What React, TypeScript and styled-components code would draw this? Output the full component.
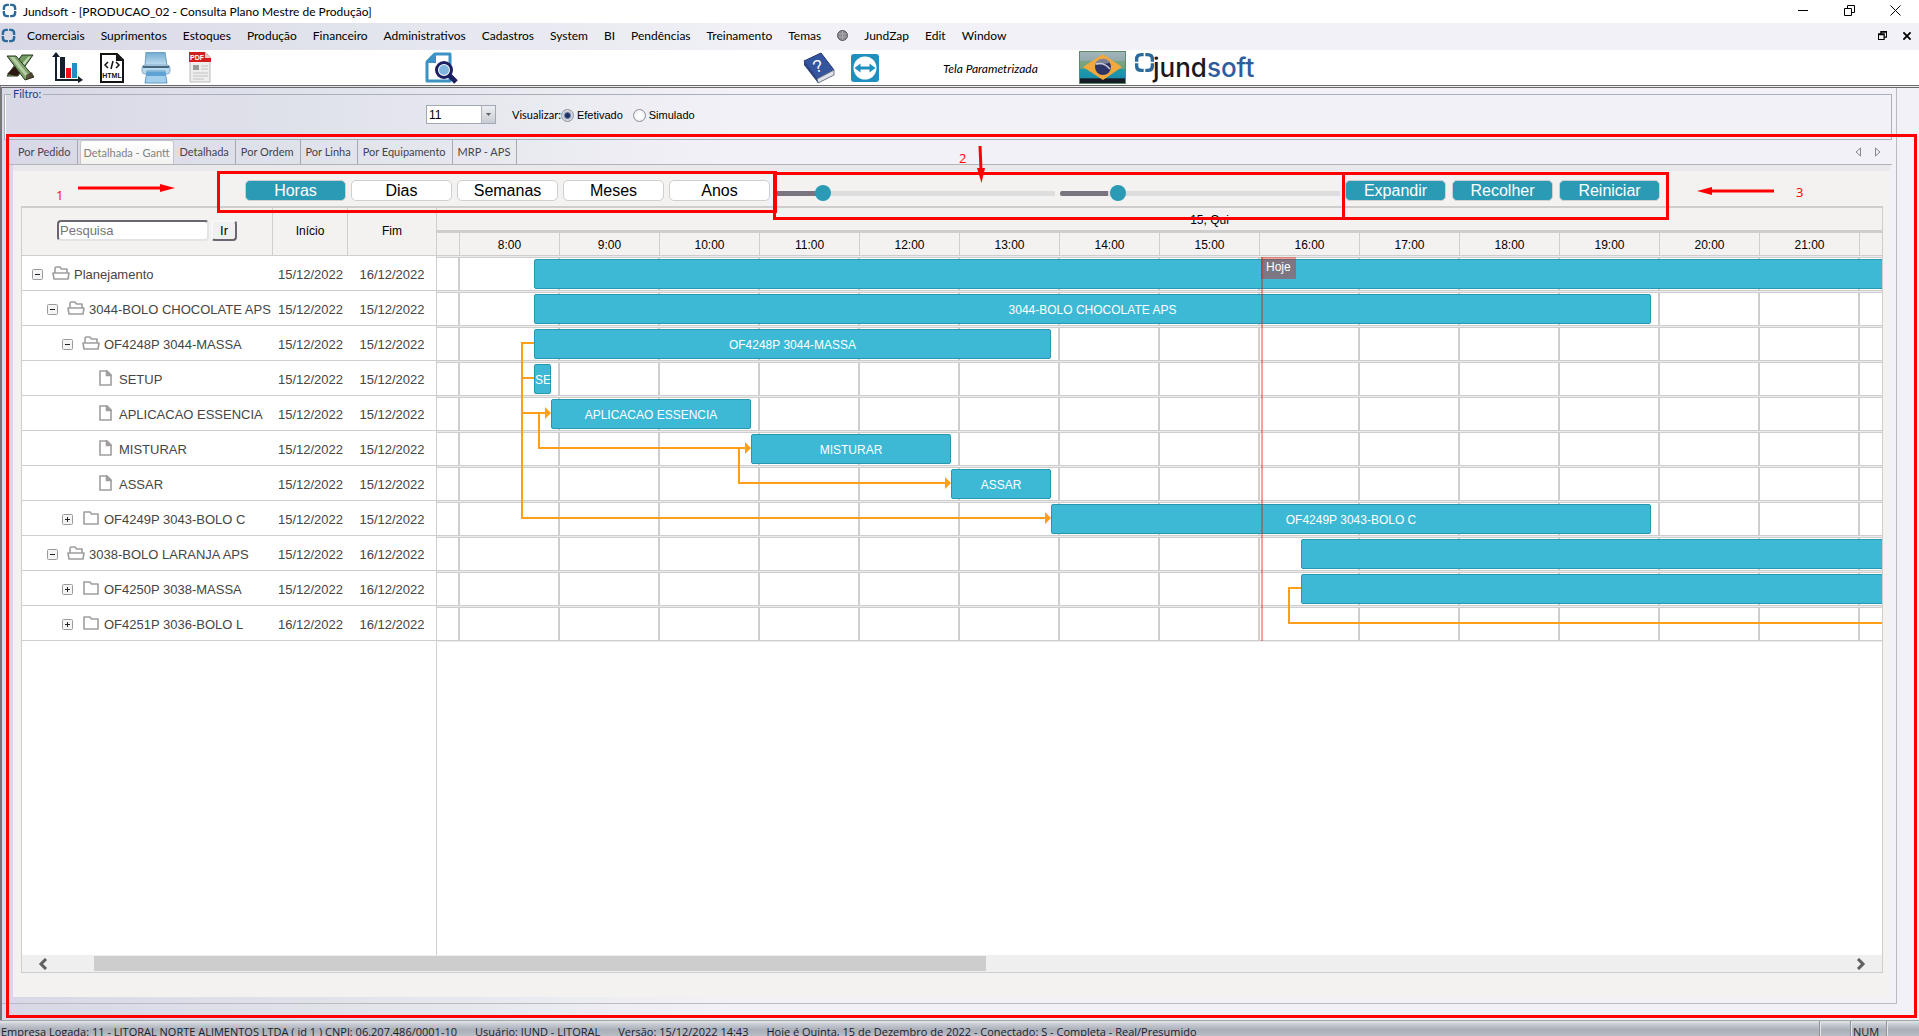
import React, { useState } from 'react';
import styled, { createGlobalStyle, css } from 'styled-components';

const uiFont = 'Lato, "Open Sans", sans-serif';
const webFont = '"Liberation Sans", Arial, sans-serif';
const red = '#ff0000';
const teal = '#2b9ab5';
const line = '#cecece';
const todayTint = 'rgba(229, 12, 0, 0.39)';

const GlobalStyle = createGlobalStyle`
  *, *::before, *::after { box-sizing: border-box; }
  body { margin: 0; overflow: hidden; background: #fff; font-family: ${uiFont}; font-size: 12px; color: #000; }
  button, input, select { font-family: inherit; font-size: inherit; color: inherit; margin: 0; }
  button { border: 0; padding: 0; background: none; cursor: pointer; }
  svg { display: block; }
`;

const Screen = styled.div`
  height: 100vh;
  display: flex;
  flex-direction: column;
  overflow: hidden;
`;

/* ---------- window chrome ---------- */

const TitleBar = styled.header`
  flex: 0 0 23px;
  display: flex;
  align-items: center;
  padding: 0 18px 2px 2px;
  background: #fff;
`;
const TitleText = styled.h1`
  margin: 0 auto 0 6px;
  padding-top: 2px;
  font-size: 12px;
  font-weight: 400;
  line-height: 16px;
`;
const WindowButtons = styled.div`
  display: flex;
  gap: ${(p: { $gap: number }) => p.$gap}px;
`;
const MenuBar = styled.nav`
  flex: 0 0 27px;
  display: flex;
  align-items: center;
  padding: 0 8px 2px 1px;
  background: linear-gradient(90deg, #d8d8e6, #e2e4ec 18%, #f1f1f7 40%);
`;
const MenuList = styled.div`
  display: flex;
  align-items: center;
  gap: 16px;
  margin: 0 auto 0 11px;
`;
const MenuItem = styled.button`
  line-height: 16px;
  white-space: nowrap;
`;

const ToolBar = styled.div`
  flex: 0 0 35px;
  display: flex;
  align-items: center;
  padding-left: 6px;
  background: #fff;
`;
const ToolGroup = styled.div<{ $width: number; $gap: number }>`
  flex: 0 0 ${(p) => p.$width}px;
  display: flex;
  align-items: center;
  gap: ${(p) => p.$gap}px;
`;
const ScreenNote = styled.em`
  flex: 0 0 136px;
  line-height: 16px;
  padding-top: 3px;
`;
const Logo = styled.div`
  display: flex;
  align-items: flex-start;
  margin-left: 8px;
`;
const LogoText = styled.span`
  font-family: Inter, ${webFont};
  font-weight: 500;
  font-size: 26px;
  line-height: 32px;
  color: #1c1720;
  margin-left: -2px;
`;
const LogoAccent = styled.span`
  color: #2c5c9c;
`;

/* ---------- workspace ---------- */

const Desk = styled.main`
  position: relative;
  flex: 1 1 0;
  min-height: 0;
  display: flex;
  border-top: 3px double #696969;
  border-left: 2px solid #77777b;
  padding: 0 22px 16px 0;
  background: linear-gradient(90deg, #d8d8e6, #e0e2ea 16%, #f2f1f7 38%);
`;
const Workspace = styled.div`
  flex: 1;
  min-width: 0;
  display: flex;
  flex-direction: column;
  border-right: 1px solid #bcbcc0;
  border-bottom: 1px solid #bcbcc0;
  padding: 0 4px 6px 2px;
`;
const Filter = styled.fieldset`
  height: 52px;
  margin: 0;
  padding: 5px 0 0 421px;
  border: 1px solid #a9afbb;
  box-shadow: inset 1px 0 0 #fff;
  display: flex;
  align-items: flex-start;
`;
const FilterTitle = styled.legend`
  margin-left: -415px;
  padding: 0 2px 0 2px;
  font-size: 11px;
  line-height: 12px;
  color: #1c3f8f;
`;
const ComboBox = styled.div`
  position: relative;
  width: 70px;
  margin-right: 16px;
`;
const ComboSelect = styled.select`
  appearance: none;
  width: 100%;
  height: 19px;
  padding: 0 2px;
  border: 1px solid #a3a9b3;
  border-radius: 0;
  background: #fff;
  font-family: ${webFont};
  font-size: 12px;
`;
const ComboArrow = styled.span`
  position: absolute;
  inset: 1px 1px 1px auto;
  width: 14px;
  display: grid;
  place-items: center;
  background: linear-gradient(#eceef1, #c9ccd2);
  border-left: 1px solid #b1b5bd;
  pointer-events: none;
`;
const FilterLabel = styled.span`
  font-size: 11px;
  line-height: 19px;
`;
const RadioLabel = styled.label`
  display: flex;
  align-items: center;
  gap: 3px;
  margin-right: 10px;
  font-family: ${webFont};
  font-size: 11px;
  line-height: 20px;
`;
const Radio = styled.input`
  appearance: none;
  width: 13px;
  height: 13px;
  border: 1px solid #8d929b;
  border-radius: 50%;
  background: radial-gradient(#fff 30%, #dfe2e8);
  &:checked {
    background: radial-gradient(#1c2f66 0 2px, #c9cfdb 4px, #eef0f4);
  }
`;

const TabStrip = styled.div`
  display: flex;
  align-items: flex-end;
  margin-left: 5px;
  height: 25px;
  border-bottom: 1px solid #b3b3b8;
`;
const Tab = styled.button<{ $active?: boolean }>`
  height: 24px;
  padding: 0 6px 0 5px;
  border-right: 1px solid #a6a7b0;
  line-height: 22px;
  font-size: 11px;
  color: #44444c;
  white-space: nowrap;
  &:first-child {
    padding: 0 7px 0 9px;
  }
  ${(p) =>
    p.$active &&
    css`
      margin: 0 1px 0 2px;
      padding: 0 3px 0 2px;
      color: #7d837f;
      background: linear-gradient(#fff, #f3f2f0);
      border: 1px solid #c6c6cc;
      border-bottom: 0;
      border-radius: 3px 3px 0 0;
    `}
`;
const TabArrows = styled.div`
  display: flex;
  gap: 14px;
  margin: 0 11px 7px auto;
`;
const TabPanel = styled.section`
  flex: 1;
  min-height: 0;
  display: flex;
  flex-direction: column;
  margin: 0 2px 0 9px;
  padding: 0 7px 24px 8px;
  background: #f3f2f0;
  border-top: 6px solid #e9e9ec;
`;

/* ---------- controls above the chart ---------- */

const Controls = styled.div`
  display: flex;
  padding: 9px 0 5px 224px;
`;
const Framed = styled.div<{ $gap: number }>`
  position: relative;
  display: flex;
  align-items: center;
  gap: ${(p) => p.$gap}px;
  margin-right: 5px;
`;
const PillButton = styled.button<{ $filled?: boolean }>`
  width: 101px;
  height: 21px;
  border: 1px solid #cfcfcf;
  border-radius: 5px;
  background: ${(p) => (p.$filled ? teal : '#fff')};
  color: ${(p) => (p.$filled ? '#fff' : '#000')};
  font-family: ${webFont};
  font-size: 16px;
  line-height: 20px;
`;
const Range = styled.input`
  appearance: none;
  width: 280px;
  height: 16px;
  margin-top: 5px;
  background: transparent;
  &::-webkit-slider-runnable-track {
    height: 5px;
    border-radius: 2px 0 0 2px;
    background: linear-gradient(90deg, #7a7480 0 48px, #dddddd 48px);
  }
  &::-webkit-slider-thumb {
    appearance: none;
    width: 16px;
    height: 16px;
    margin-top: -6px;
    border-radius: 50%;
    background: ${teal};
  }
`;

/* ---------- gantt ---------- */

const Gantt = styled.div`
  flex: 1;
  min-height: 0;
  display: flex;
  flex-direction: column;
  border: 1px solid ${line};
  border-top-width: 2px;
  background: #fff;
  font-family: ${webFont};
`;
const Panes = styled.div`
  flex: 1;
  min-height: 0;
  display: flex;
`;
const TaskPane = styled.div`
  flex: 0 0 415px;
  border-right: 1px solid ${line};
`;
const TaskTable = styled.table`
  width: 414px;
  table-layout: fixed;
  border-collapse: separate;
  border-spacing: 0;
`;
const HeadCell = styled.th<{ $width: number }>`
  width: ${(p) => p.$width}px;
  height: 48px;
  padding: 0 0 2px;
  font-size: 12px;
  font-weight: 400;
  background: #f3f2f0;
  border-bottom: 1px solid ${line};
  border-right: 1px solid ${line};
  &:last-child {
    border-right: 0;
  }
`;
const Search = styled.form`
  display: flex;
  gap: 2px;
  padding-left: 35px;
`;
const SearchInput = styled.input`
  width: 152px;
  height: 21px;
  padding: 0 1px 1px;
  border: 2px solid;
  border-color: #6b6670 #e4e4e4 #e4e4e4 #6b6670;
  border-radius: 4px;
  background: #fff;
  font-size: 13px;
  &::placeholder {
    color: #757575;
  }
`;
const SearchButton = styled.button`
  width: 26px;
  height: 21px;
  border: 2px solid;
  border-color: #f7f7f7 #6b6670 #6b6670 #f7f7f7;
  border-radius: 4px;
  background: #f0f0f0;
  font-size: 13px;
  line-height: 15px;
`;
const Cell = styled.td`
  height: 35px;
  padding: 2px 0 0;
  font-size: 13px;
  text-align: center;
  color: #454545;
  border-bottom: 1px solid ${line};
`;
const TreeCell = styled.div<{ $level: number }>`
  display: flex;
  align-items: center;
  padding-left: ${(p) => 10 + p.$level * 15}px;
  white-space: nowrap;
`;
const Toggle = styled.button`
  width: 11px;
  height: 11px;
`;
const ToggleGap = styled.span`
  width: 11px;
`;
const NodeIcon = styled.span`
  width: 31px;
  padding: 0 0 2px 4px;
  display: flex;
  justify-content: center;
`;

const TimePane = styled.div`
  flex: 1;
  min-width: 0;
  overflow: hidden;
`;
const DayHead = styled.div`
  height: 25px;
  padding-left: 100px;
  text-align: center;
  font-size: 12px;
  line-height: 24px;
  background: #f3f2f0;
  border-bottom: 3px solid ${line};
`;
const HourHead = styled.div`
  display: flex;
  height: 23px;
  background: #f3f2f0;
  border-bottom: 1px solid ${line};
`;
const HourCell = styled.div<{ $width: number }>`
  flex: 0 0 ${(p) => p.$width}px;
  border-right: 1px solid ${line};
  text-align: center;
  font-size: 12px;
  line-height: 25px;
`;
const Canvas = styled.div`
  position: relative;
  border-bottom: 1px solid #ebebeb;
`;
const Lane = styled.div`
  display: flex;
  height: 35px;
  border-top: 1px solid #ebebeb;
`;
const Slot = styled.div<{ $width: number }>`
  flex: 0 0 ${(p) => p.$width}px;
  border: 1px solid ${line};
  border-width: 1px 2px 1px 0;
`;
const Bar = styled.div`
  position: absolute;
  height: 30px;
  border: 1px solid #2898b0;
  border-radius: 2px;
  background: #3db9d5;
  color: #fff;
  font-size: 12px;
  line-height: 31px;
  text-align: center;
  white-space: nowrap;
  overflow: hidden;
`;
const Links = styled.svg`
  position: absolute;
  inset: 0;
  width: 100%;
  height: 100%;
`;
const Today = styled.div`
  position: absolute;
  top: 1px;
  bottom: 0;
  border-left: 2px solid ${todayTint};
`;
const TodayLabel = styled.span`
  position: absolute;
  top: 1px;
  padding: 0 5px;
  height: 22px;
  line-height: 21px;
  font-size: 12px;
  color: #fff;
  background: ${todayTint};
`;

const ScrollBar = styled.div`
  display: flex;
  align-items: center;
  height: 17px;
  padding: 0 16px;
  background: #efefef;
`;
const ScrollTrack = styled.div`
  flex: 1;
  height: 15px;
  margin: 0 46px;
`;
const ScrollThumb = styled.div`
  width: 52%;
  height: 15px;
  background: #cdcdcd;
`;

/* ---------- status bar ---------- */

const StatusBar = styled.footer`
  flex: 0 0 16px;
  display: flex;
  gap: 18px;
  overflow: hidden;
  padding: 3px 0 0 1px;
  border-top: 1px solid #a0a5ab;
  background: linear-gradient(#e4e5e6, #c3c7d0 4px, #a9afb7 9px, #b9bdc4);
  color: #1c1c30;
  font-family: "Open Sans", sans-serif;
  font-size: 11px;
  line-height: 16px;
  white-space: nowrap;
`;
const StatusKeys = styled.div`
  display: flex;
  margin: -3px 0 0 auto;
`;
const StatusKey = styled.span<{ $width: number }>`
  width: ${(p) => p.$width}px;
  padding: 3px 0 0 2px;
  border-left: 1px solid #8f949b;
  box-shadow: inset 1px 0 0 #e6e6e6;
`;

/* ---------- red annotations ---------- */

const Frame = styled.div<{ $inset: string }>`
  position: absolute;
  inset: ${(p) => p.$inset};
  border: 3px solid ${red};
  pointer-events: none;
  z-index: 2;
`;
const Pointer = styled.svg<{ $left: string; $top: number }>`
  position: absolute;
  left: ${(p) => p.$left};
  top: ${(p) => p.$top}px;
  z-index: 3;
`;
const Mark = styled.span<{ $left: string; $top: number }>`
  position: absolute;
  left: ${(p) => p.$left};
  top: ${(p) => p.$top}px;
  font-family: "Open Sans", sans-serif;
  font-size: 13px;
  line-height: 16px;
  color: ${red};
  z-index: 3;
`;

/* ---------- icons ---------- */

const Ring = ({ size }: { size: number }) => (
  <svg width={size} height={size} viewBox="0 0 20 20" fill="none" stroke="#2a6b9c" strokeWidth="3.200">
    <path d="M9.200 2.500H7Q2.500 2.500 2.500 7V9.200M10.800 2.500H13Q17.500 2.500 17.500 7V9.200M17.500 10.800V13Q17.500 17.500 13 17.500H10.800M9.200 17.500H7Q2.500 17.500 2.500 13V10.800" />
  </svg>
);
const ExcelIcon = () => (
  <svg width="29" height="27" viewBox="0 0 29 27">
    <path d="M16 1h11L12 22H1z" fill="#6f9a5e" stroke="#27391f" />
    <path d="M22 3l3-1-8 11-2-2z" fill="#c3d8b4" />
    <path d="M1 20l9-9 6 5-5 6z" fill="#2c1712" />
    <path d="M1 2h9l18 21-9 3z" fill="#7da169" stroke="#27391f" />
    <path d="M4 3h4l16 20-3 1z" fill="#b7cda6" />
    <path d="M20 21l6-3 2 5-8 3z" fill="#3a231c" opacity="0.7" />
  </svg>
);
const ChartIcon = () => (
  <svg width="31" height="31" viewBox="0 0 31 31">
    <path d="M4 3v25h23" fill="none" stroke="#15202c" strokeWidth="2" />
    <path d="M0 5l4-5 4 5zM26 24l5 4-5 3z" fill="#15202c" />
    <path d="M8 5h5v21H8z" fill="#15202c" />
    <path d="M14 16h5v10h-5z" fill="#ff1111" />
    <path d="M20 11h5v15h-5z" fill="#2090c0" />
  </svg>
);
const HtmlIcon = () => (
  <svg width="24" height="30" viewBox="0 0 24 30">
    <path d="M1 1h16l6 6v22H1z" fill="#fff" stroke="#141414" strokeWidth="2" />
    <path d="M16 1v7h7z" fill="#141414" />
    <path d="M8 9l-3 3 3 3M16 9l3 3-3 3M13 8l-2 8" fill="none" stroke="#141414" strokeWidth="1.500" />
    <text x="12" y="25" textAnchor="middle" fontFamily="Liberation Sans" fontWeight="700" fontSize="7" fill="#141414">
      HTML
    </text>
  </svg>
);
const PrinterIcon = () => (
  <svg width="30" height="32" viewBox="0 0 30 32">
    <defs>
      <linearGradient id="printer" x1="0" y1="0" x2="0" y2="1">
        <stop offset="0" stopColor="#6ea9cf" />
        <stop offset="1" stopColor="#c6e2f4" />
      </linearGradient>
    </defs>
    <path d="M5 0h19l2 14H4z" fill="url(#printer)" stroke="#6d9cbd" />
    <rect x="1" y="13" width="28" height="9" rx="3" fill="#b9d9ee" stroke="#86adc8" />
    <path d="M2 15h26" stroke="#47677f" strokeWidth="2" />
    <path d="M6 19h18l2 12H4z" fill="#a4cfec" stroke="#5f9bc6" />
    <path d="M6 20h18l1 4H5z" fill="#5ea3d4" />
  </svg>
);
const PdfIcon = () => (
  <svg width="24" height="31" viewBox="0 0 24 31">
    <path d="M2 1h16l4 5v24H2z" fill="#ededed" stroke="#bdbdbd" />
    <path d="M1 0h16l6 6v4H1z" fill="#d21f1f" />
    <path d="M17 0v6h6z" fill="#f3c4c4" />
    <text x="9" y="8" textAnchor="middle" fontFamily="Liberation Sans" fontWeight="700" fontSize="7" fill="#fff">
      PDF
    </text>
    <rect x="5" y="13" width="6" height="5" fill="#9a9a9a" />
    <path d="M13 14h7M13 17h7M5 21h15M5 24h15M5 27h11" stroke="#c2c2c2" />
  </svg>
);
const PreviewIcon = () => (
  <svg width="33" height="32" viewBox="0 0 33 32">
    <path d="M10 2h15v27H2V10z" fill="#fff" stroke="#3d92c4" strokeWidth="3" strokeLinejoin="round" />
    <path d="M1 11V9L9 1h2v10z" fill="#3d92c4" />
    <path d="M24 23l7 7" stroke="#1d1f63" strokeWidth="5" />
    <circle cx="19" cy="18" r="7.500" fill="#fff" stroke="#1d1f63" strokeWidth="3" />
    <circle cx="19" cy="18" r="5" fill="#7fb5de" />
  </svg>
);
const BookIcon = () => (
  <svg width="33" height="32" viewBox="0 0 33 32">
    <path d="M1 9L18 1l13 17-17 9z" fill="#35559f" stroke="#22356b" />
    <path d="M14 27l17-9v5l-16 8z" fill="#dfe2e8" stroke="#6e7686" />
    <path d="M1 9l13 18 1 4L1 13z" fill="#27407e" />
    <text x="10" y="20" fontFamily="Liberation Sans" fontSize="17" fill="#fff" transform="rotate(-18 14 14)">
      ?
    </text>
  </svg>
);
const RemoteIcon = () => (
  <svg width="28" height="28" viewBox="0 0 28 28">
    <rect width="28" height="28" rx="3" fill="#1f8fc0" />
    <circle cx="14" cy="14" r="11.500" fill="#fff" />
    <path d="M3.500 14l6-4.500v3h9v-3l6 4.500-6 4.500v-3h-9v3z" fill="#1f8fc0" />
  </svg>
);
const FlagIcon = () => (
  <svg width="47" height="33" viewBox="0 0 47 33">
    <defs>
      <linearGradient id="flag" x1="0" y1="0" x2="0" y2="1">
        <stop offset="0" stopColor="#a3b6bd" />
        <stop offset="0.280" stopColor="#93a9ad" />
        <stop offset="0.300" stopColor="#7aa583" />
        <stop offset="0.540" stopColor="#6fa07d" />
        <stop offset="0.560" stopColor="#1f9aa8" />
        <stop offset="0.830" stopColor="#1b8dae" />
        <stop offset="0.850" stopColor="#141c26" />
      </linearGradient>
    </defs>
    <rect x="0.500" y="0.500" width="46" height="32" fill="url(#flag)" stroke="#5f8a66" />
    <path d="M24 3l19 13-19 13L4 16z" fill="#f2a83a" />
    <circle cx="24" cy="16" r="8" fill="#2d3566" />
    <path d="M16 14a8 8 0 0 1 15-2z" fill="#8f92a4" opacity="0.8" />
    <path d="M17 13q8-2 14 5" fill="none" stroke="#c9c9d6" strokeWidth="1.500" />
  </svg>
);
const BallIcon = () => (
  <svg width="11" height="11" viewBox="0 0 11 11">
    <circle cx="5.500" cy="5.500" r="5" fill="#8b8b8f" stroke="#55555a" />
    <path d="M2 4h7M2 7h7M5.500 1v9" stroke="#a9a9ae" />
  </svg>
);
const Minus = () => (
  <svg width="11" height="11" viewBox="0 0 11 11"><path d="M0 5.500h10" stroke="#000" /></svg>
);
const Restore = ({ bold }: { bold?: boolean }) => (
  <svg width={bold ? 9 : 11} height={bold ? 9 : 11} viewBox="0 0 11 11" fill="none" stroke="#000" strokeWidth={bold ? 1.5 : 1}>
    <path d="M0.500 3.500h7v7h-7zM3.500 3V0.500h7v7H8" />
    {bold && <path d="M0.500 4.500h7M3.500 1.500h7" />}
  </svg>
);
const Close = ({ bold }: { bold?: boolean }) => (
  <svg width={bold ? 8 : 11} height={bold ? 8 : 11} viewBox="0 0 11 11" stroke="#000" strokeWidth={bold ? 2.5 : 1}>
    <path d="M0.500 0.500l10 10M10.500 0.500l-10 10" />
  </svg>
);
const ToggleIcon = ({ open }: { open: boolean }) => (
  <svg width="11" height="11" viewBox="0 0 11 11">
    <rect x="0.500" y="0.500" width="10" height="10" rx="1" fill="#f4f4f4" stroke="#9c98a0" />
    <path d={open ? 'M3 5.500h5' : 'M3 5.500h5M5.500 3v5'} stroke="#222" />
  </svg>
);
const OpenFolder = () => (
  <svg width="18" height="14" viewBox="0 0 18 14" fill="none" stroke="#a09da0" strokeWidth="1.600">
    <path d="M3 7V2L4 1h4l1.500 2H15v4" strokeLinejoin="round" />
    <path d="M1 7h16l-1 6H2z" strokeLinejoin="round" />
  </svg>
);
const ClosedFolder = () => (
  <svg width="16" height="14" viewBox="0 0 16 14" fill="none" stroke="#a09da0" strokeWidth="1.600">
    <path d="M1 13V1h6l1.500 2H15v10z" strokeLinejoin="round" />
  </svg>
);
const FileIcon = () => (
  <svg width="13" height="16" viewBox="0 0 13 16" fill="none" stroke="#a09da0" strokeWidth="1.600">
    <path d="M1 1h7l4 4v10H1z" />
    <path d="M7.500 1v4.500H12z" fill="#a09da0" />
  </svg>
);
const Chevron = ({ d }: { d: string }) => (
  <svg width="10" height="12" viewBox="0 0 10 12" fill="none" stroke="#606060" strokeWidth="3"><path d={d} /></svg>
);

/* ---------- data ---------- */

const menus = ['Comerciais', 'Suprimentos', 'Estoques', 'Produção', 'Financeiro', 'Administrativos', 'Cadastros', 'System', 'BI', 'Pendências', 'Treinamento', 'Temas'];
const tabs = ['Por Pedido', 'Detalhada - Gantt', 'Detalhada', 'Por Ordem', 'Por Linha', 'Por Equipamento', 'MRP - APS'];
const scales = ['Horas', 'Dias', 'Semanas', 'Meses', 'Anos'];
const actions = ['Expandir', 'Recolher', 'Reiniciar'];

type Kind = 'open' | 'closed' | 'file';
type Task = { name: string; level: number; kind: Kind; start: string; end: string };
const d15 = '15/12/2022';
const d16 = '16/12/2022';
const tasks: Task[] = [
  { name: 'Planejamento', level: 0, kind: 'open', start: d15, end: d16 },
  { name: '3044-BOLO CHOCOLATE APS', level: 1, kind: 'open', start: d15, end: d15 },
  { name: 'OF4248P 3044-MASSA', level: 2, kind: 'open', start: d15, end: d15 },
  { name: 'SETUP', level: 3, kind: 'file', start: d15, end: d15 },
  { name: 'APLICACAO ESSENCIA', level: 3, kind: 'file', start: d15, end: d15 },
  { name: 'MISTURAR', level: 3, kind: 'file', start: d15, end: d15 },
  { name: 'ASSAR', level: 3, kind: 'file', start: d15, end: d15 },
  { name: 'OF4249P 3043-BOLO C', level: 2, kind: 'closed', start: d15, end: d15 },
  { name: '3038-BOLO LARANJA APS', level: 1, kind: 'open', start: d15, end: d16 },
  { name: 'OF4250P 3038-MASSA', level: 2, kind: 'closed', start: d15, end: d16 },
  { name: 'OF4251P 3036-BOLO L', level: 2, kind: 'closed', start: d16, end: d16 },
];
const bars = [
  { row: 0, from: 8.74, to: 40 },
  { row: 1, from: 8.74, to: 19.91, label: '3044-BOLO CHOCOLATE APS' },
  { row: 2, from: 8.74, to: 13.91, label: 'OF4248P 3044-MASSA' },
  { row: 3, from: 8.74, to: 8.91, label: 'SE' },
  { row: 4, from: 8.91, to: 10.91, label: 'APLICACAO ESSENCIA' },
  { row: 5, from: 10.91, to: 12.91, label: 'MISTURAR' },
  { row: 6, from: 12.91, to: 13.91, label: 'ASSAR' },
  { row: 7, from: 13.91, to: 19.91, label: 'OF4249P 3043-BOLO C' },
  { row: 8, from: 16.41, to: 40 },
  { row: 9, from: 16.41, to: 40 },
];
const hourPx = 100;
const rowPx = 35;
const nowHour = 16.01;
const xOf = (hour: number) => Math.round(23 + (hour - 8) * hourPx);
const hours = Array.from({ length: 14 }, (_, i) => 8 + i);
const slots = [23, ...hours.map(() => hourPx), hourPx];

const nodeIcons: Record<Kind, React.ReactElement> = {
  open: <OpenFolder />,
  closed: <ClosedFolder />,
  file: <FileIcon />,
};

export default function App() {
  const [scale, setScale] = useState('Horas');
  return (
    <Screen>
      <GlobalStyle />
      <TitleBar>
        <Ring size={15} />
        <TitleText>Jundsoft - [PRODUCAO_02 - Consulta Plano Mestre de Produção]</TitleText>
        <WindowButtons $gap={35}>
          <button aria-label="Minimizar"><Minus /></button>
          <button aria-label="Restaurar"><Restore /></button>
          <button aria-label="Fechar"><Close /></button>
        </WindowButtons>
      </TitleBar>
      <MenuBar>
        <Ring size={15} />
        <MenuList>
          {menus.map((m) => <MenuItem key={m}>{m}</MenuItem>)}
          <BallIcon />
          <MenuItem>JundZap</MenuItem>
          <MenuItem>Edit</MenuItem>
          <MenuItem>Window</MenuItem>
        </MenuList>
        <WindowButtons $gap={16}>
          <button aria-label="Restaurar janela"><Restore bold /></button>
          <button aria-label="Fechar janela"><Close bold /></button>
        </WindowButtons>
      </MenuBar>
      <ToolBar>
        <ToolGroup $width={419} $gap={17}>
          <button aria-label="Excel"><ExcelIcon /></button>
          <button aria-label="Gráfico"><ChartIcon /></button>
          <button aria-label="HTML"><HtmlIcon /></button>
          <button aria-label="Imprimir"><PrinterIcon /></button>
          <button aria-label="PDF"><PdfIcon /></button>
        </ToolGroup>
        <ToolGroup $width={378} $gap={0}>
          <button aria-label="Visualizar"><PreviewIcon /></button>
        </ToolGroup>
        <ToolGroup $width={140} $gap={15}>
          <button aria-label="Ajuda"><BookIcon /></button>
          <button aria-label="Acesso remoto"><RemoteIcon /></button>
        </ToolGroup>
        <ScreenNote>Tela Parametrizada</ScreenNote>
        <FlagIcon />
        <Logo>
          <Ring size={21} />
          <LogoText>jund<LogoAccent>soft</LogoAccent></LogoText>
        </Logo>
      </ToolBar>

      <Desk>
        <Workspace>
          <Filter>
            <FilterTitle>Filtro:</FilterTitle>
            <ComboBox>
              <ComboSelect aria-label="Empresa" defaultValue="11">
                <option>11</option>
              </ComboSelect>
              <ComboArrow>
                <svg width="5" height="3" viewBox="0 0 5 3"><path d="M0 0h5L2.500 3z" fill="#5d6168" /></svg>
              </ComboArrow>
            </ComboBox>
            <FilterLabel>Visualizar:</FilterLabel>
            <RadioLabel><Radio type="radio" name="view" defaultChecked />Efetivado</RadioLabel>
            <RadioLabel><Radio type="radio" name="view" />Simulado</RadioLabel>
          </Filter>

          <TabStrip>
            {tabs.map((t, i) => <Tab key={t} $active={i === 1}>{t}</Tab>)}
            <TabArrows>
              <button aria-label="Aba anterior">
                <svg width="6" height="10" viewBox="0 0 6 10"><path d="M5.500 1v8L1 5z" fill="none" stroke="#85858f" /></svg>
              </button>
              <button aria-label="Próxima aba">
                <svg width="6" height="10" viewBox="0 0 6 10"><path d="M0.500 1v8L5 5z" fill="none" stroke="#85858f" /></svg>
              </button>
            </TabArrows>
          </TabStrip>

          <TabPanel>
            <Controls>
              <Framed $gap={5}>
                {scales.map((s) => (
                  <PillButton key={s} $filled={s === scale} onClick={() => setScale(s)}>{s}</PillButton>
                ))}
                <Frame $inset="-9px -7px -12px -28px" />
              </Framed>
              <Framed $gap={5}>
                <Range type="range" aria-label="Largura da escala" defaultValue={15} />
                <Range type="range" aria-label="Altura da linha" defaultValue={19} />
                <Frame $inset="-8px -5px -19px -2px" />
              </Framed>
              <Framed $gap={6}>
                {actions.map((a) => <PillButton key={a} $filled>{a}</PillButton>)}
                <Frame $inset="-8px -9px -19px -3px" />
              </Framed>
            </Controls>

            <Gantt>
              <Panes>
                <TaskPane>
                  <TaskTable>
                    <thead>
                      <tr>
                        <HeadCell $width={251}>
                          <Search onSubmit={(e) => e.preventDefault()}>
                            <SearchInput placeholder="Pesquisa" aria-label="Pesquisa" />
                            <SearchButton>Ir</SearchButton>
                          </Search>
                        </HeadCell>
                        <HeadCell $width={75}>Início</HeadCell>
                        <HeadCell $width={88}>Fim</HeadCell>
                      </tr>
                    </thead>
                    <tbody>
                      {tasks.map((t) => (
                        <tr key={t.name}>
                          <Cell>
                            <TreeCell $level={t.level}>
                              {t.kind === 'file' ? (
                                <ToggleGap />
                              ) : (
                                <Toggle aria-label={t.kind === 'open' ? 'Recolher' : 'Expandir'}>
                                  <ToggleIcon open={t.kind === 'open'} />
                                </Toggle>
                              )}
                              <NodeIcon>{nodeIcons[t.kind]}</NodeIcon>
                              {t.name}
                            </TreeCell>
                          </Cell>
                          <Cell>{t.start}</Cell>
                          <Cell>{t.end}</Cell>
                        </tr>
                      ))}
                    </tbody>
                  </TaskTable>
                </TaskPane>

                <TimePane>
                  <DayHead>15, Qui</DayHead>
                  <HourHead>
                    <HourCell $width={23} />
                    {hours.map((h) => <HourCell key={h} $width={hourPx}>{h}:00</HourCell>)}
                  </HourHead>
                  <Canvas>
                    {tasks.map((t) => (
                      <Lane key={t.name}>
                        {slots.map((w, i) => <Slot key={i} $width={w} />)}
                      </Lane>
                    ))}
                    {bars.map((b) => (
                      <Bar
                        key={b.row}
                        style={{ left: xOf(b.from), top: b.row * rowPx + 3, width: xOf(b.to) - xOf(b.from) }}
                      >
                        {b.label}
                      </Bar>
                    ))}
                    <Links>
                      <g fill="none" stroke="#ff9f17" strokeWidth="2">
                        <path d="M97 87H85V262H609" />
                        <path d="M85 122H97M85 157H109" />
                        <path d="M102 157V192H309" />
                        <path d="M302 192V227H509" />
                        <path d="M864 332H852V367H4000" />
                      </g>
                      <path
                        d="M108 151l6 6-6 6zM308 186l6 6-6 6zM508 221l6 6-6 6zM608 256l6 6-6 6z"
                        fill="#ff9f17"
                      />
                    </Links>
                    <Today style={{ left: xOf(nowHour) }} />
                    <TodayLabel style={{ left: xOf(nowHour) }}>Hoje</TodayLabel>
                  </Canvas>
                </TimePane>
              </Panes>
              <ScrollBar>
                <button aria-label="Rolar à esquerda"><Chevron d="M8 1L3 6l5 5" /></button>
                <ScrollTrack><ScrollThumb /></ScrollTrack>
                <button aria-label="Rolar à direita"><Chevron d="M2 1l5 5-5 5" /></button>
              </ScrollBar>
            </Gantt>
          </TabPanel>
        </Workspace>

        <Frame $inset="46px 2px 2px 4px" />
        <Mark $left="54px" $top={99}>1</Mark>
        <Pointer $left="76px" $top={95} width="98" height="10">
          <path d="M0 5H84" stroke={red} strokeWidth="3" />
          <path d="M82 1l15 4-15 4z" fill={red} />
        </Pointer>
        <Mark $left="957px" $top={62}>2</Mark>
        <Pointer $left="973px" $top={58} width="12" height="38">
          <path d="M5 0L6 24" stroke={red} strokeWidth="3" />
          <path d="M2 22h8L6.500 37z" fill={red} />
        </Pointer>
        <Pointer $left="1695px" $top={98} width="78" height="10">
          <path d="M14 5H77" stroke={red} strokeWidth="3" />
          <path d="M15 1L0 5l15 4z" fill={red} />
        </Pointer>
        <Mark $left="1794px" $top={96}>3</Mark>
      </Desk>

      <StatusBar>
        <span>Empresa Logada: 11 - LITORAL NORTE ALIMENTOS LTDA ( id 1 ) CNPJ: 06.207.486/0001-10</span>
        <span>Usuário: JUND - LITORAL</span>
        <span>Versão: 15/12/2022 14:43</span>
        <span>Hoje é Quinta, 15 de Dezembro de 2022 - Conectado: S - Completa - Real/Presumido</span>
        <StatusKeys>
          <StatusKey $width={31} />
          <StatusKey $width={36}>NUM</StatusKey>
          <StatusKey $width={33} />
        </StatusKeys>
      </StatusBar>
    </Screen>
  );
}
